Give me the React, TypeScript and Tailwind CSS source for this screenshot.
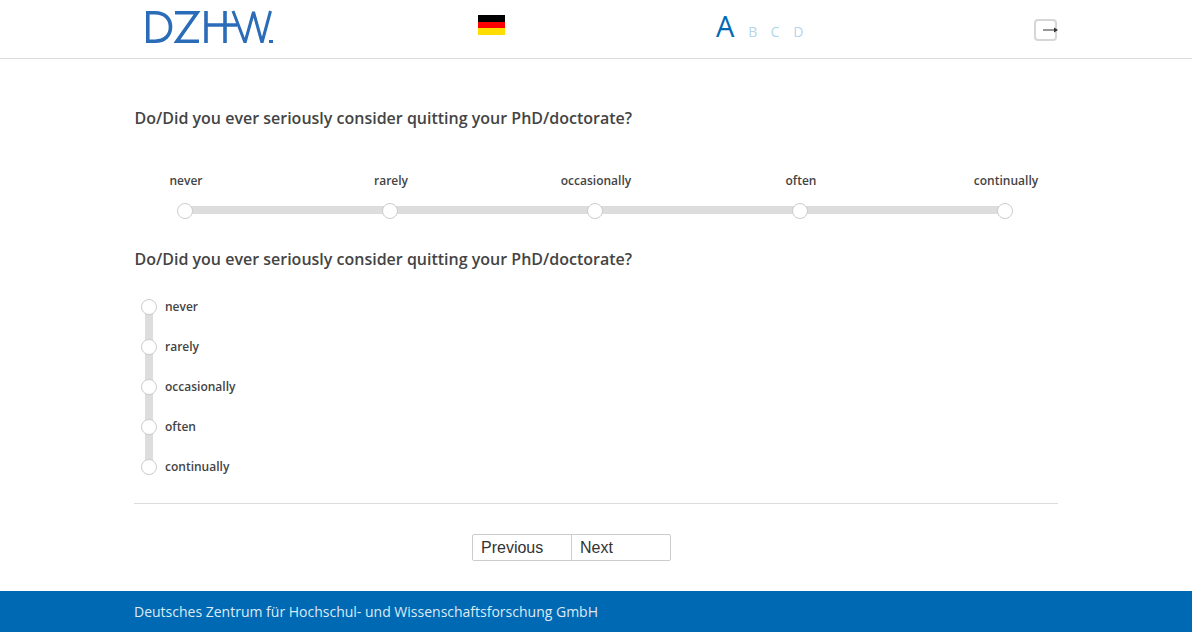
const options = ["never", "rarely", "occasionally", "often", "continually"]

const question = "Do/Did you ever seriously consider quitting your PhD/doctorate?"

const Logo = () => (
    <svg width="130" height="36" viewBox="0 0 130 36" fill="none" stroke="#2b6cb8" strokeWidth="3.6">
        <path d="M3.800 1V33M2 2.800H11C21 2.800 26.500 9 26.500 17C26.500 25 21 31.200 11 31.200H2" />
        <path d="M31 2.800H53L33 31.200H55" />
        <path d="M62 1V33M81 1V33M62 15H93" />
        <path d="M89 1L101 32.500L109.500 2L118 32.500L126.500 1" strokeWidth="3" strokeLinejoin="bevel" />
        <rect x="125" y="30" width="4" height="3" fill="#2b6cb8" stroke="none" />
    </svg>
)

const Radio = ({ className = "" }: { className?: string }) => (
    <span className={`block w-4 h-4 shrink-0 rounded-full bg-white border border-[#cccccc] ${className}`} />
)

export default function App() {
    return (
        <div className="h-[641px] pb-[9px] flex flex-col bg-white font-['Open_Sans',sans-serif] text-[#444444]">
            <header className="h-[59px] shrink-0 border-b border-[#dddddd] flex items-start">
                <div className="pt-[10px] ml-[144px]"><Logo /></div>
                <div className="ml-[204px] mt-[15px] w-[27px] h-5 flex flex-col">
                    <div className="h-[7px] bg-black" />
                    <div className="h-[6px] bg-[#ff0000]" />
                    <div className="h-[7px] bg-[#ffdd00]" />
                </div>
                <div className="ml-[211px] mt-[8px] w-[96px] flex items-baseline text-[#b5d5ec] text-sm">
                    <span className="text-[#0069b4] text-[29px] leading-9 font-medium">A</span>
                    <span className="ml-[14px]">B</span>
                    <span className="ml-[13px]">C</span>
                    <span className="ml-[14px]">D</span>
                </div>
                <div className="relative ml-[222px] mt-[19px] w-[23px] h-[22px] rounded-[4px] border-2 border-[#d6d6d6]">
                    <svg className="absolute left-[7px] top-[5.5px]" width="16" height="6" viewBox="0 0 16 6" fill="#333333">
                        <path d="M0 2.500H11V0.500L15 3L11 5.500V3.500H0Z" />
                    </svg>
                </div>
            </header>

            <main className="flex-1 w-[923px] ml-[134.5px]">
                <h2 className="mt-[48px] text-base leading-[22px] font-semibold">{question}</h2>

                <div className="relative mt-[42px] w-[922px]">
                    <div className="absolute left-[51px] right-[51px] top-[35px] h-2 bg-[#dddddd]" />
                    <div className="relative grid grid-cols-5 w-[1025px] -ml-[51px]">
                        {options.map((o) => (
                            <label key={o} className="flex flex-col items-center gap-3">
                                <span className="text-xs leading-[20px] font-semibold">{o}</span>
                                <Radio className="mr-[3px]" />
                            </label>
                        ))}
                    </div>
                </div>

                <h2 className="mt-[29px] text-base leading-[22px] font-semibold">{question}</h2>

                <div className="relative mt-[29px] ml-[6.5px]">
                    <div className="absolute left-1 top-2 w-2 h-40 bg-[#dddddd]" />
                    <div className="relative flex flex-col gap-6">
                        {options.map((o) => (
                            <label key={o} className="flex items-center gap-2 h-4">
                                <Radio />
                                <span className="text-xs font-semibold">{o}</span>
                            </label>
                        ))}
                    </div>
                </div>

                <div className="mt-[28px] -ml-[0.5px] w-[924px] border-t border-[#dddddd] pt-[30px]">
                    <div className="flex w-[199px] ml-[338px] border border-[#cccccc] rounded-[2px] font-['Liberation_Sans',sans-serif] text-base leading-[25px] text-[#333333]">
                        <button className="w-[99px] h-[25px] pl-2 text-left border-r border-[#cccccc]">Previous</button>
                        <button className="w-[98px] h-[25px] pl-2 text-left">Next</button>
                    </div>
                </div>
            </main>

            <footer className="h-[41px] shrink-0 bg-[#0069b4] text-[#dcebf5] text-sm pl-[134px] pt-[11px] leading-5">
                Deutsches Zentrum für Hochschul- und Wissenschaftsforschung GmbH
            </footer>
        </div>
    )
}
